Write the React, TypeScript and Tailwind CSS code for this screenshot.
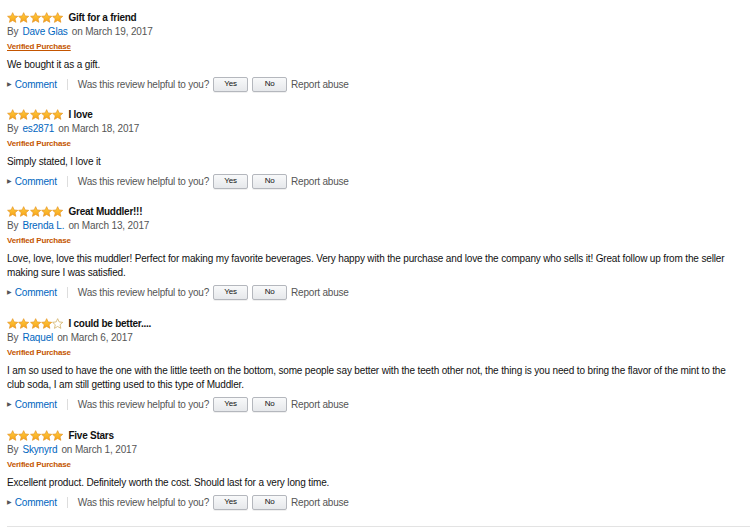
import React from "react";

type Review = {
  rating: number;
  title: string;
  author: string;
  date: string;
  body: string[];
  verifiedUnderline?: boolean;
};

const reviews: Review[] = [
  {
    rating: 5,
    title: "Gift for a friend",
    author: "Dave Glas",
    date: "March 19, 2017",
    body: ["We bought it as a gift."],
    verifiedUnderline: true,
  },
  {
    rating: 5,
    title: "I love",
    author: "es2871",
    date: "March 18, 2017",
    body: ["Simply stated, I love it"],
  },
  {
    rating: 5,
    title: "Great Muddler!!!",
    author: "Brenda L.",
    date: "March 13, 2017",
    body: [
      "Love, love, love this muddler! Perfect for making my favorite beverages. Very happy with the purchase and love the company who sells it! Great follow up from the seller",
      "making sure I was satisfied.",
    ],
  },
  {
    rating: 4,
    title: "I could be better....",
    author: "Raquel",
    date: "March 6, 2017",
    body: [
      "I am so used to have the one with the little teeth on the bottom, some people say better with the teeth other not, the thing is you need to bring the flavor of the mint to the",
      "club soda, I am still getting used to this type of Muddler.",
    ],
  },
  {
    rating: 5,
    title: "Five Stars",
    author: "Skynyrd",
    date: "March 1, 2017",
    body: ["Excellent product. Definitely worth the cost. Should last for a very long time."],
  },
];

const STAR =
  "M6 0.6 L7.6 4.1 L11.4 4.5 L8.5 7.1 L9.4 10.9 L6 8.9 L2.6 10.9 L3.5 7.1 L0.6 4.5 L4.4 4.1 Z";

function Star({ filled }: { filled: boolean }) {
  return (
    <svg width="11.3" height="11" viewBox="0 0 12 11.5" className="block">
      <defs>
        <linearGradient id="sg" x1="0" y1="0" x2="0" y2="1">
          <stop offset="0" stopColor="#ffce3d" />
          <stop offset="1" stopColor="#f7a21b" />
        </linearGradient>
      </defs>
      <path
        d={STAR}
        fill={filled ? "url(#sg)" : "#ffffff"}
        stroke={filled ? "#e4901a" : "#c9a24a"}
        strokeWidth="0.7"
        strokeLinejoin="round"
      />
    </svg>
  );
}

function Stars({ rating }: { rating: number }) {
  return (
    <div className="flex items-center">
      {[0, 1, 2, 3, 4].map((i) => (
        <Star key={i} filled={i < rating} />
      ))}
    </div>
  );
}

function Btn({ label }: { label: string }) {
  return (
    <span className="flex h-[15px] w-[35px] items-center justify-center rounded-[2px] border border-[#b4b7bd] bg-gradient-to-b from-[#f8f9fa] to-[#e6e8eb] text-[8px] text-[#111] shadow-[0_1px_0_rgba(0,0,0,0.06)]">
      {label}
    </span>
  );
}

function ReviewItem({ r }: { r: Review }) {
  const multi = r.body.length > 1;
  return (
    <div className={multi ? "pb-[15px]" : "pb-[14px]"}>
      <div className="flex h-[14px] items-center gap-[5px]">
        <Stars rating={r.rating} />
        <span className="text-[10px] font-bold tracking-[-0.25px] text-[#111]">{r.title}</span>
      </div>
      <div className="flex h-[14px] items-center text-[10px] tracking-[-0.15px] text-[#555]">
        <span>By</span>
        <span className="ml-[4px] text-[#0066c0]">{r.author}</span>
        <span className="ml-[4px]">on {r.date}</span>
      </div>
      <div className="mt-[2px] flex h-[14px] items-center">
        <span
          className={
            "text-[8px] font-bold tracking-[-0.2px] text-[#c45500]" +
            (r.verifiedUnderline ? " underline" : "")
          }
        >
          Verified Purchase
        </span>
      </div>
      <div className="mt-[4px] text-[10px] leading-[14px] tracking-[-0.15px] text-[#111]">
        {r.body.map((l, i) => (
          <div key={i} className="whitespace-nowrap">
            {l}
          </div>
        ))}
      </div>
      <div className="mt-[3px] flex h-[18px] items-center text-[10px] tracking-[-0.2px]">
        <span className="mr-[3px] text-[6px] text-[#555]">▶</span>
        <span className="text-[#0066c0]">Comment</span>
        <span className="ml-[10px] mr-[10px] h-[11px] w-px bg-[#ddd]" />
        <span className="text-[#555]">Was this review helpful to you?</span>
        <span className="ml-[4px] flex items-center gap-[4px]">
          <Btn label="Yes" />
          <Btn label="No" />
        </span>
        <span className="ml-[4px] text-[#555]">Report abuse</span>
      </div>
    </div>
  );
}

export default function App() {
  return (
    <div
      className="h-[529px] w-[750px] overflow-hidden bg-white"
      style={{ fontFamily: '"Liberation Sans", Arial, sans-serif' }}
    >
      <div className="pl-[7px] pt-[10px]">
        {reviews.map((r, i) => (
          <ReviewItem key={i} r={r} />
        ))}
      </div>
      <div className="ml-[7px] mt-[1px] h-px bg-[#e3e3e3]" />
    </div>
  );
}
